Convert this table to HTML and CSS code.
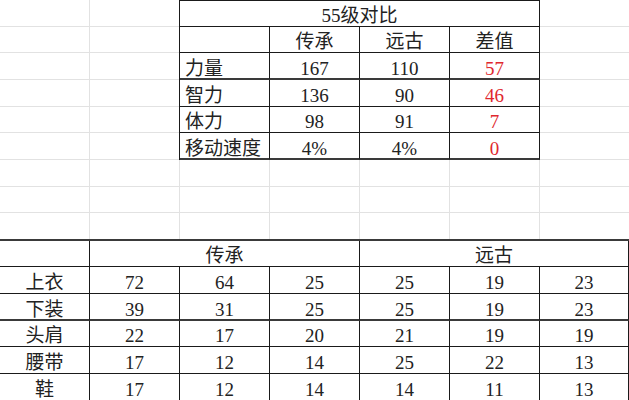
FILE: index.html
```html
<!DOCTYPE html>
<html lang="zh">
<head>
<meta charset="utf-8">
<title>55级对比</title>
<link rel="stylesheet" href="styles.css">
</head>
<body>
<div class="sheet">
  <div class="tbl top">
    <div class="c span4 title">55级对比</div>
    <div class="c"></div>
    <div class="c">传承</div>
    <div class="c">远古</div>
    <div class="c">差值</div>

    <div class="c lbl thick">力量</div>
    <div class="c thick">167</div>
    <div class="c thick">110</div>
    <div class="c red thick">57</div>

    <div class="c lbl">智力</div>
    <div class="c">136</div>
    <div class="c">90</div>
    <div class="c red">46</div>

    <div class="c lbl">体力</div>
    <div class="c">98</div>
    <div class="c">91</div>
    <div class="c red">7</div>

    <div class="c lbl thick">移动速度</div>
    <div class="c thick">4%</div>
    <div class="c thick">4%</div>
    <div class="c red thick">0</div>
  </div>

  <div class="tbl bottom">
    <div class="c"></div>
    <div class="c span3">传承</div>
    <div class="c span3">远古</div>

    <div class="c">上衣</div>
    <div class="c">72</div><div class="c">64</div><div class="c">25</div>
    <div class="c">25</div><div class="c">19</div><div class="c">23</div>

    <div class="c thick">下装</div>
    <div class="c thick">39</div><div class="c thick">31</div><div class="c thick">25</div>
    <div class="c thick">25</div><div class="c thick">19</div><div class="c thick">23</div>

    <div class="c">头肩</div>
    <div class="c">22</div><div class="c">17</div><div class="c">20</div>
    <div class="c">21</div><div class="c">19</div><div class="c">19</div>

    <div class="c">腰带</div>
    <div class="c">17</div><div class="c">12</div><div class="c">14</div>
    <div class="c">25</div><div class="c">22</div><div class="c">13</div>

    <div class="c">鞋</div>
    <div class="c">17</div><div class="c">12</div><div class="c">14</div>
    <div class="c">14</div><div class="c">11</div><div class="c">13</div>
  </div>
</div>
</body>
</html>
```

FILE: styles.css
```css
html, body {
  margin: 0;
  padding: 0;
  background: #ffffff;
}

.sheet {
  width: 629px;
  height: 400px;
  overflow: hidden;
  display: grid;
  grid-template-columns: repeat(6, 90px) 89px;
  grid-template-rows: repeat(5, 27px 26px 27px);
  background-color: #ffffff;
  background-image:
    linear-gradient(to right, transparent 89px, #e2e2e2 89px, #e2e2e2 90px, transparent 90px),
    linear-gradient(to bottom, transparent 26px, #e2e2e2 26px, #e2e2e2 27px, transparent 27px),
    linear-gradient(to bottom, transparent 52px, #e2e2e2 52px, #e2e2e2 53px, transparent 53px),
    linear-gradient(to bottom, transparent 79px, #e2e2e2 79px, #e2e2e2 80px, transparent 80px);
  background-size: 90px 80px;
  font-family: "Liberation Serif", "Noto Sans CJK SC", serif;
  font-size: 19px;
  color: #222222;
}

.tbl {
  display: grid;
  background: #ffffff;
}

.tbl.top {
  grid-column: 3 / 7;
  grid-row: 1 / 7;
  margin-left: -1px;
  border-left: 1px solid #1a1a1a;
  border-top: 1px solid #1a1a1a;
  grid-template-columns: repeat(4, 90px);
  grid-template-rows: 26px 26px 27px 27px 26px 27px;
}

.tbl.bottom {
  grid-column: 1 / 8;
  grid-row: 10 / 16;
  margin-top: -1px;
  border-top: 2px solid #3a3a3a;
  grid-template-columns: repeat(6, 90px) 89px;
  grid-template-rows: 26px 27px 27px 26px 27px 27px;
}

.c {
  box-sizing: border-box;
  border-right: 1px solid #1a1a1a;
  border-bottom: 1px solid #1a1a1a;
  display: flex;
  align-items: flex-end;
  justify-content: center;
  padding-bottom: 1px;
  line-height: 1;
  white-space: nowrap;
}

.c.thick {
  border-bottom: 2px solid #3a3a3a;
  padding-bottom: 0;
}

.span4 { grid-column: span 4; }
.span3 { grid-column: span 3; }

.lbl {
  justify-content: flex-start;
  padding-left: 5px;
}

.red {
  color: #e0282e;
}
```
